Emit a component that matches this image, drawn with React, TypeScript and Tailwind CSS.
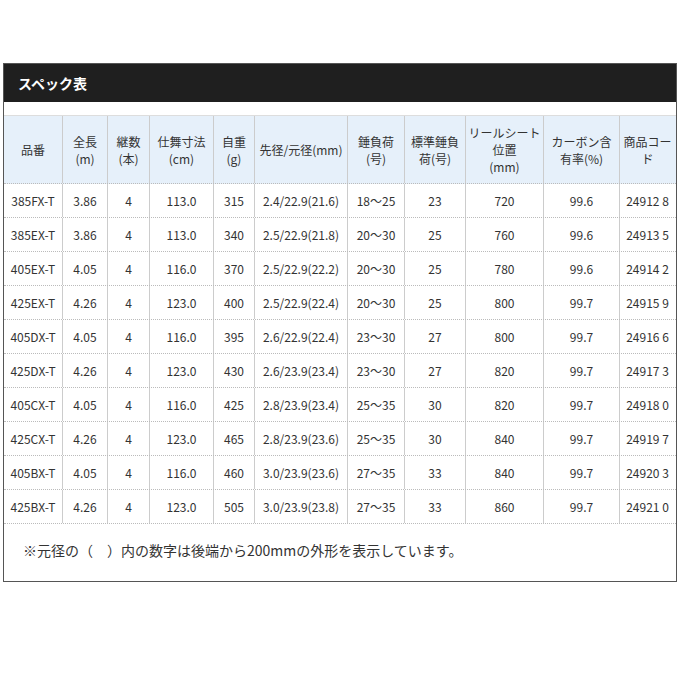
const widths = [59, 45, 42, 64, 41, 93, 57, 61, 78, 76, 55];
const heads = ["品番", "全長\n(m)", "継数\n(本)", "仕舞寸法\n(cm)", "自重\n(g)", "先径/元径(mm)", "錘負荷\n(号)", "標準錘負\n荷(号)", "リールシート\n位置\n(mm)", "カーボン含\n有率(%)", "商品コー\nド"];
const rows = [
  ["385FX-T","3.86","4","113.0","315","2.4/22.9(21.6)","18～25","23","720","99.6","24912 8"],
  ["385EX-T","3.86","4","113.0","340","2.5/22.9(21.8)","20～30","25","760","99.6","24913 5"],
  ["405EX-T","4.05","4","116.0","370","2.5/22.9(22.2)","20～30","25","780","99.6","24914 2"],
  ["425EX-T","4.26","4","123.0","400","2.5/22.9(22.4)","20～30","25","800","99.7","24915 9"],
  ["405DX-T","4.05","4","116.0","395","2.6/22.9(22.4)","23～30","27","800","99.7","24916 6"],
  ["425DX-T","4.26","4","123.0","430","2.6/23.9(23.4)","23～30","27","820","99.7","24917 3"],
  ["405CX-T","4.05","4","116.0","425","2.8/23.9(23.4)","25～35","30","820","99.7","24918 0"],
  ["425CX-T","4.26","4","123.0","465","2.8/23.9(23.6)","25～35","30","840","99.7","24919 7"],
  ["405BX-T","4.05","4","116.0","460","3.0/23.9(23.6)","27～35","33","840","99.7","24920 3"],
  ["425BX-T","4.26","4","123.0","505","3.0/23.9(23.8)","27～35","33","860","99.7","24921 0"],
];
export default function App() {
  return (
    <div className="w-[680px] h-[680px] bg-white pt-[63px] pl-[3px]" style={{ fontFamily: '"Noto Sans CJK JP", "Noto Sans", sans-serif' }}>
      <div className="w-[674px] h-[519px] border border-[#555]">
        <div className="h-[38px] bg-[#1f1f1f] text-white font-bold text-[14px] flex items-center pl-[14px]">スペック表</div>
        <div className="mt-[13px] border-t border-[#ddd]">
          <div className="flex bg-[#e6f0fa] h-[68px] border-b border-dotted border-[#bbb]">
            {heads.map((h, i) => (
              <div key={i} style={{ width: widths[i] }} className={`flex items-center justify-center text-center text-[12px] leading-[17px] text-[#333] whitespace-pre ${i < 10 ? "border-r border-[#ccc]" : ""}`}>{h}</div>
            ))}
          </div>
          {rows.map((r, ri) => (
            <div key={ri} className="flex h-[34px] border-b border-dotted border-[#bbb]">
              {r.map((c, i) => (
                <div key={i} style={{ width: widths[i] }} className={`flex items-center justify-center text-[12px] text-[#333] whitespace-nowrap ${i < 10 ? "border-r border-[#ccc]" : ""}`}>{c}</div>
              ))}
            </div>
          ))}
        </div>
        <div className="pl-[19px] pt-[16px] text-[14px] text-[#333]">※元径の（　）内の数字は後端から200mmの外形を表示しています。</div>
      </div>
    </div>
  );
}
